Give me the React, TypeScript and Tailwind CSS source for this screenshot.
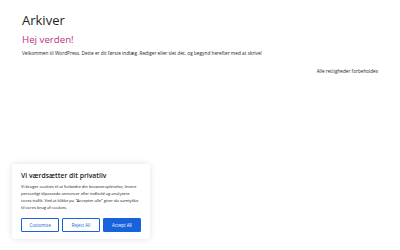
import React from 'react';

const font = { fontFamily: '"Open Sans", "Noto Sans", sans-serif' };

export default function App() {
  return (
    <div className="relative w-[400px] h-[250px] bg-white overflow-hidden" style={font}>
      {/* Page content */}
      <main className="px-[22px] pt-[11px]">
        <h1 className="text-[13px] leading-[19px] text-[#1e1e1e] font-normal">Arkiver</h1>
        <h2 className="mt-[3px] text-[9.7px] leading-[14px] text-[#b8327c] font-normal">Hej verden!</h2>
        <p className="mt-[3px] text-[4.75px] leading-[7px] text-[#1e1e1e]">
          Velkommen til WordPress. Dette er dit første indlæg. Rediger eller slet det, og begynd herefter med at skrive!
        </p>
        <p className="mt-[11px] text-right text-[4.7px] leading-[7px] text-[#1e1e1e]">Alle rettigheder forbeholdes</p>
      </main>

      {/* Cookie consent banner */}
      <div className="absolute left-[12px] top-[164px] w-[138px] rounded-[3px] bg-white px-[9px] pt-[7px] pb-[7px] shadow-[0_0_6px_rgba(0,0,0,0.12)]">
        <h3 className="text-[6.8px] leading-[9px] font-semibold text-[#212121]">Vi værdsætter dit privatliv</h3>
        <p className="mt-[3px] text-[4.2px] leading-[7px] tracking-[-0.05px] text-[#212121]">
          Vi bruger cookies til at forbedre din browseroplevelse, levere personligt tilpassede annoncer eller indhold og analysere vores trafik. Ved at klikke på "Accepter alle" giver du samtykke til vores brug af cookies.
        </p>
        <div className="mt-[7px] flex gap-[2.5px]">
          <button className="flex-1 h-[14px] border border-[#1863dc] rounded-[1px] text-[4.4px] text-[#1863dc] bg-white">Customise</button>
          <button className="flex-1 h-[14px] border border-[#1863dc] rounded-[1px] text-[4.4px] text-[#1863dc] bg-white">Reject All</button>
          <button className="flex-1 h-[14px] border border-[#1863dc] rounded-[1px] text-[4.4px] text-white bg-[#1863dc]">Accept All</button>
        </div>
      </div>
    </div>
  );
}
